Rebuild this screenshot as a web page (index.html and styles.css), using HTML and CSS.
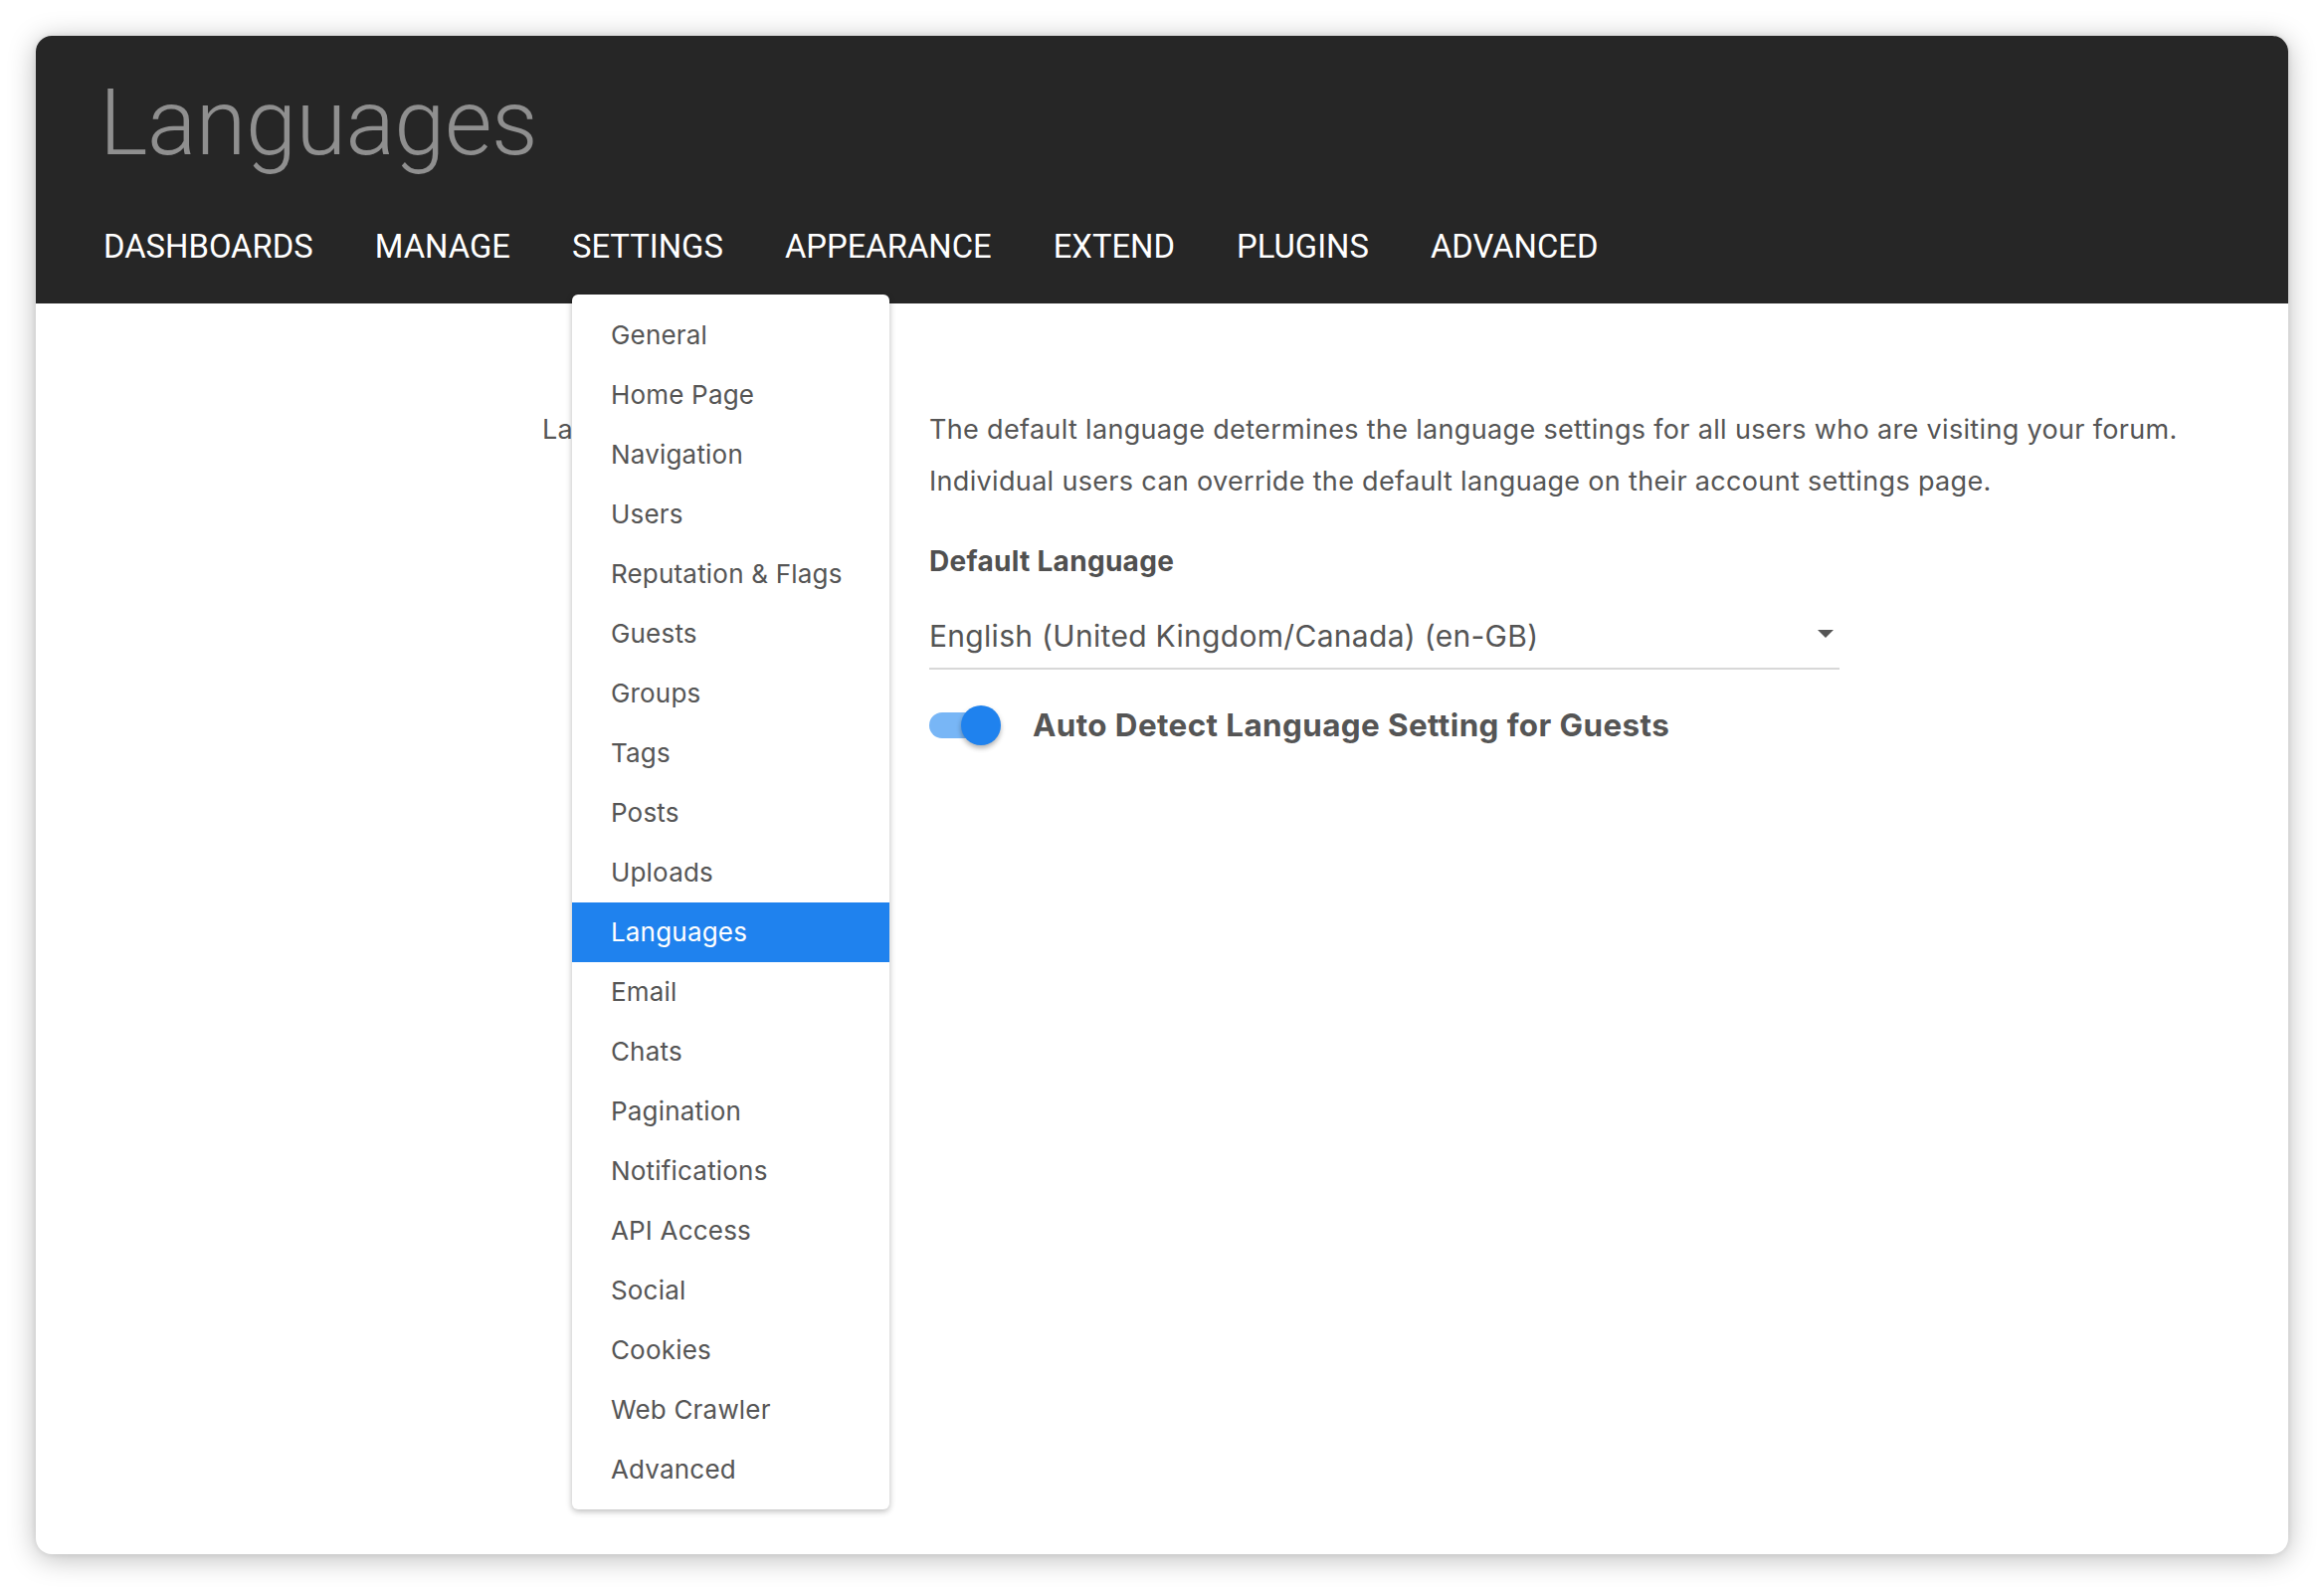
FILE: index.html
```html
<!DOCTYPE html>
<html lang="en">
<head>
<meta charset="utf-8">
<title>Languages</title>
<link rel="stylesheet" href="styles.css">
</head>
<body>
<div class="window">
  <header class="header">
    <h1 class="title">Languages</h1>
    <nav class="nav">
      <div class="nav-item">DASHBOARDS</div>
      <div class="nav-item">MANAGE</div>
      <div class="nav-item nav-open">SETTINGS
        <ul class="dropdown">
          <li>General</li>
          <li>Home Page</li>
          <li>Navigation</li>
          <li>Users</li>
          <li>Reputation &amp; Flags</li>
          <li>Guests</li>
          <li>Groups</li>
          <li>Tags</li>
          <li>Posts</li>
          <li>Uploads</li>
          <li class="active">Languages</li>
          <li>Email</li>
          <li>Chats</li>
          <li>Pagination</li>
          <li>Notifications</li>
          <li>API Access</li>
          <li>Social</li>
          <li>Cookies</li>
          <li>Web Crawler</li>
          <li>Advanced</li>
        </ul>
      </div>
      <div class="nav-item">APPEARANCE</div>
      <div class="nav-item">EXTEND</div>
      <div class="nav-item">PLUGINS</div>
      <div class="nav-item">ADVANCED</div>
    </nav>
  </header>
  <main class="content">
    <div class="label-col">Language Settings</div>
    <div class="form-col">
      <p class="help">The default language determines the language settings for all users who are visiting your forum.<br>Individual users can override the default language on their account settings page.</p>
      <div class="field-label">Default Language</div>
      <div class="select">
        <span class="select-value">English (United Kingdom/Canada) (en-GB)</span>
        <span class="caret"></span>
      </div>
      <div class="switch-row">
        <span class="switch"><span class="switch-track"></span><span class="switch-thumb"></span></span>
        <span class="switch-label">Auto Detect Language Setting for Guests</span>
      </div>
    </div>
  </main>
</div>
</body>
</html>
```

FILE: styles.css
```css
* { box-sizing: border-box; }
html, body {
  margin: 0;
  padding: 0;
  background: #ffffff;
}
body {
  width: 2336px;
  height: 1598px;
  padding: 36px;
  font-family: Inter, "Noto Sans", sans-serif;
  overflow: hidden;
}
.window {
  position: relative;
  width: 2264px;
  height: 1526px;
  background: #ffffff;
  border-radius: 16px;
  box-shadow: 0 4px 28px rgba(0, 0, 0, 0.28), 0 0 6px rgba(0, 0, 0, 0.08);
}
.header {
  background: #262626;
  border-radius: 16px 16px 0 0;
  height: 269px;
  padding: 33px 0 0 64px;
}
.title {
  margin: 0;
  font-family: Roboto, "Liberation Sans", sans-serif;
  font-weight: 300;
  font-size: 92px;
  line-height: 110px;
  color: #8f8f8f;
  letter-spacing: -0.5px;
}
.nav {
  display: flex;
  margin-top: 49px;
  margin-left: 4px;
  gap: 62px;
}
.nav-item {
  position: relative;
  font-family: Roboto, "Liberation Sans", sans-serif;
  font-size: 32.8px;
  line-height: 40px;
  color: #ffffff;
}
.dropdown {
  position: absolute;
  left: 0;
  top: 68px;
  width: 319px;
  margin: 0;
  padding: 11px 0 10px;
  list-style: none;
  background: #ffffff;
  border-radius: 6px;
  box-shadow: 0 2px 6px rgba(0, 0, 0, 0.28);
  z-index: 5;
}
.dropdown li {
  height: 60px;
  line-height: 60px;
  padding-left: 39px;
  font-family: Inter, "Noto Sans", sans-serif;
  font-size: 26px;
  color: #555555;
  letter-spacing: 0.2px;
}
.dropdown li.active {
  background: #1f82ee;
  color: #ffffff;
}
.content {
  display: grid;
  grid-template-columns: 389px 1fr;
  padding: 101px 0 0 509px;
  color: #555555;
}
.label-col {
  font-size: 27px;
  line-height: 52px;
  letter-spacing: 0.33px;
  color: #555555;
}
.help {
  margin: 0;
  font-size: 27px;
  line-height: 52px;
  letter-spacing: 0.33px;
  color: #555555;
}
.field-label {
  margin-top: 36px;
  font-size: 28px;
  line-height: 36px;
  letter-spacing: 0.3px;
  font-weight: 700;
  color: #505050;
}
.select {
  display: flex;
  align-items: center;
  justify-content: space-between;
  width: 915px;
  margin-top: 37px;
  padding: 0 6px 12px 0;
  border-bottom: 2px solid #d8d8d8;
}
.select-value {
  font-size: 30px;
  line-height: 40px;
  letter-spacing: 0.3px;
  color: #555555;
}
.caret {
  width: 0;
  height: 0;
  border-left: 8px solid transparent;
  border-right: 8px solid transparent;
  border-top: 8px solid #555555;
  margin-top: -4px;
}
.switch-row {
  display: flex;
  align-items: center;
  margin-top: 35px;
  gap: 32px;
}
.switch {
  position: relative;
  width: 72px;
  height: 42px;
  flex: none;
}
.switch-track {
  position: absolute;
  left: 0;
  top: 8px;
  width: 66px;
  height: 26px;
  border-radius: 13px;
  background: #78b6f6;
}
.switch-thumb {
  position: absolute;
  left: 32px;
  top: 1px;
  width: 40px;
  height: 40px;
  border-radius: 50%;
  background: #1f82ee;
  box-shadow: 0 3px 5px rgba(0, 0, 0, 0.3);
}
.switch-label {
  font-size: 31.4px;
  font-weight: 700;
  line-height: 42px;
  letter-spacing: 0.4px;
  color: #555555;
}
```
